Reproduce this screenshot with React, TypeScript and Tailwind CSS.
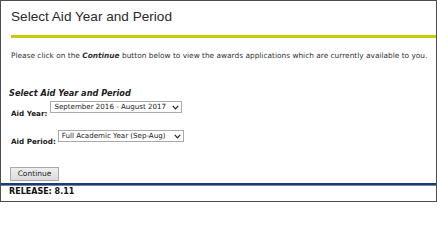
import React from "react";

const Chevron = () => (
    <svg width="7" height="5" viewBox="0 0 7 5" className="shrink-0">
        <path d="M0.8 0.8 L3.5 3.8 L6.2 0.8" fill="none" stroke="#222" strokeWidth="1.2" />
    </svg>
);

const FakeSelect = ({ value, width }: { value: string; width: string }) => (
    <div
        className={`${width} h-[12px] flex items-center justify-between border border-[#a9a9a9] bg-white pl-[3px] pr-[2px] text-[7.1px] leading-none text-[#222]`}
    >
        <span className="whitespace-nowrap">{value}</span>
        <Chevron />
    </div>
);

export default function App() {
    return (
        <div className="w-[437px] h-[202px] border border-[#4d4d4d] bg-white flex flex-col overflow-hidden font-[family-name:'DejaVu_Sans',sans-serif] text-[#222]">
            {/* Page title */}
            <h1 className="shrink-0 mt-[7px] ml-[10px] h-[18px] text-[13.6px] leading-[18px] font-[family-name:'Liberation_Sans',Arial,sans-serif] text-[#2b2b2b]">
                Select Aid Year and Period
            </h1>
            <div className="shrink-0 mt-[9px] ml-[10px] h-[3px] bg-[#c9cc00]" />

            <p className="shrink-0 mt-[13px] ml-[10px] text-[7.4px] leading-[10px] whitespace-nowrap text-[#333]">
                Please click on the <b className="italic">Continue</b> button below to view the awards
                applications which are currently available to you.
            </p>

            {/* Form */}
            <div className="shrink-0 mt-[27px] ml-[8px] text-[8.2px] leading-[10px] font-bold italic">
                Select Aid Year and Period
            </div>
            <div className="shrink-0 mt-[3px] ml-[10px] flex items-start">
                <span className="mt-[8px] text-[7.2px] leading-[10px] font-bold">Aid Year:</span>
                <div className="ml-[3px]">
                    <FakeSelect value="September 2016 - August 2017" width="w-[132px]" />
                </div>
            </div>
            <div className="shrink-0 mt-[11px] ml-[10px] flex items-start">
                <span className="mt-[7px] text-[7.2px] leading-[10px] font-bold">Aid Period:</span>
                <div className="ml-[2px]">
                    <FakeSelect value="Full Academic Year (Sep-Aug)" width="w-[126px]" />
                </div>
            </div>

            <div className="shrink-0 mt-[20px] ml-[9px] flex">
                <button className="w-[49px] h-[14px] border border-[#a8a8a8] bg-gradient-to-b from-[#eeeeee] to-[#dcdcdc] text-[7.5px] leading-none text-[#222]">
                    Continue
                </button>
            </div>
            <div className="shrink-0 mt-[2px] h-[3px] bg-[#1d3b6e] border-b border-[#6a86b8]" />
            <div className="shrink-0 mt-[1px] ml-[8px] text-[8px] leading-[10px] font-bold text-[#111]">RELEASE: 8.11</div>
        </div>
    );
}
